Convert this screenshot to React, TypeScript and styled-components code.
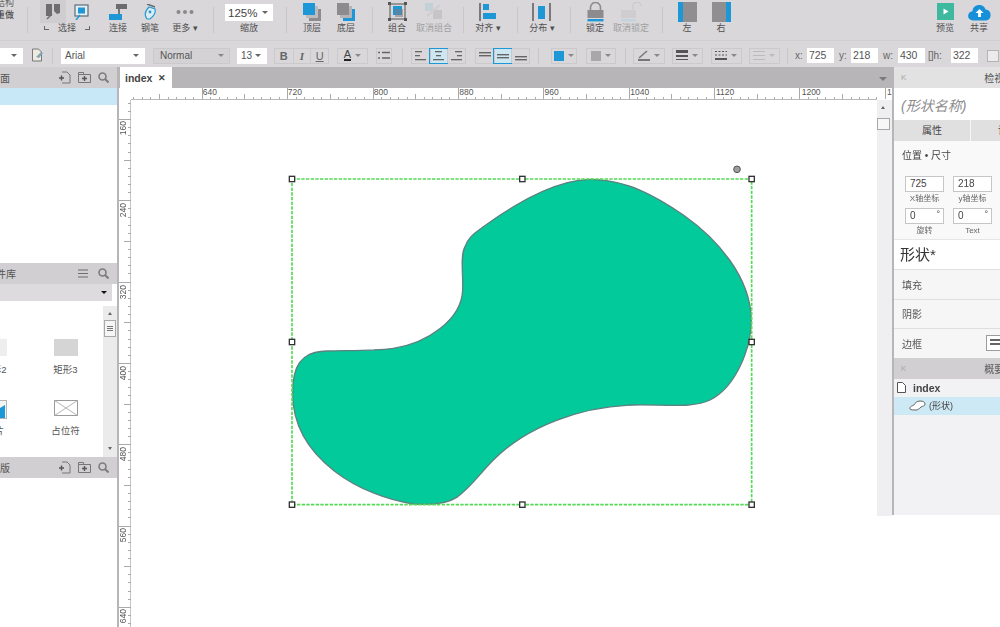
import React from 'react';
import styled, { createGlobalStyle } from 'styled-components';

const GlobalStyle = createGlobalStyle`
  html, body {
    margin: 0;
    padding: 0;
    background: #ffffff;
    overflow: hidden;
  }
  * {
    box-sizing: border-box;
  }
`;

const FONT = `"Liberation Sans", "Noto Sans CJK SC", sans-serif`;
const BLUE = '#1d97d6';

const Page = styled.div`
  width: 1000px;
  height: 627px;
  display: flex;
  flex-direction: column;
  overflow: hidden;
  font-family: ${FONT};
  color: #4a494b;
  filter: blur(0.3px);
`;

/* ---------- top toolbar ---------- */

const TopBar = styled.div`
  height: 41px;
  flex: none;
  display: flex;
  background: #d9d7d9;
  border-bottom: 1px solid #d0ced0;
  overflow: hidden;
`;

const FileMenu = styled.div`
  width: 27px;
  flex: none;
  font-size: 9px;
  line-height: 11px;
  padding-right: 13px;
  white-space: nowrap;
  direction: rtl;
  color: #333;
  & > div:first-child {
    margin-top: -2px;
    color: #666;
  }
  & > div:last-child {
    margin-top: 1px;
  }
`;

const Divider = styled.div<{ $ml?: number; $h?: number }>`
  width: 1px;
  flex: none;
  height: ${p => p.$h ?? 26}px;
  align-self: center;
  margin-left: ${p => p.$ml ?? 0}px;
  background: #c8c6c8;
`;

const Tool = styled.div<{ $w: number; $ml?: number; $faded?: boolean }>`
  width: ${p => p.$w}px;
  margin-left: ${p => p.$ml ?? 0}px;
  flex: none;
  display: flex;
  flex-direction: column;
  align-items: center;
  color: ${p => (p.$faded ? '#a09fa2' : '#505052')};
`;

const IconSlot = styled.div`
  height: 23px;
  display: flex;
  align-items: center;
  justify-content: center;
  gap: 8px;
`;

const ToolLabel = styled.div`
  font-size: 9px;
  line-height: 12px;
  margin-top: -1px;
  white-space: nowrap;
`;

const SelectTool = styled(Tool)`
  position: relative;
`;

const HotIcon = styled.div`
  width: 26px;
  height: 23px;
  margin-left: -5px;
  display: flex;
  align-items: center;
  justify-content: center;
  background: #cfcdcf;
`;

const Bracket = styled.span<{ $side: 'left' | 'right' }>`
  position: absolute;
  top: 26px;
  ${p => (p.$side === 'left' ? 'left: 7px' : 'right: 7px')};
  width: 5px;
  height: 4px;
  border-bottom: 1px solid #666;
  ${p => (p.$side === 'left' ? 'border-left' : 'border-right')}: 1px solid #666;
`;

const ZoomBox = styled.div`
  width: 48px;
  height: 17px;
  margin-top: 4px;
  margin-bottom: 2px;
  padding: 0 5px 0 3px;
  display: flex;
  align-items: center;
  justify-content: space-between;
  background: #ffffff;
  font-size: 11.5px;
  color: #444;
`;

const Caret = styled.span<{ $color?: string }>`
  width: 0;
  height: 0;
  flex: none;
  border-left: 3px solid transparent;
  border-right: 3px solid transparent;
  border-top: 3px solid ${p => p.$color ?? '#666'};
`;

const PushRight = styled.div`
  margin-left: auto;
  display: flex;
  padding-right: 4px;
`;

/* ---------- format toolbar ---------- */

const FormatBar = styled.div`
  height: 26px;
  flex: none;
  display: flex;
  align-items: center;
  padding-top: 3px;
  background: #d9d7d9;
  overflow: hidden;
`;

const Select = styled.div<{ $w: number; $ml?: number; $flat?: boolean }>`
  width: ${p => p.$w}px;
  margin-left: ${p => p.$ml ?? 0}px;
  height: 16px;
  flex: none;
  padding: 0 5px 0 3px;
  display: flex;
  align-items: center;
  justify-content: space-between;
  font-size: 10px;
  color: #555;
  background: ${p => (p.$flat ? '#d4d2d4' : '#ffffff')};
  border: 1px solid ${p => (p.$flat ? '#cbc9cb' : '#ffffff')};
  & > span:first-child {
    padding-left: ${p => (p.$flat ? 3 : 0)}px;
  }
`;

const DocButton = styled.div`
  width: 14px;
  margin-left: 8px;
  flex: none;
  display: flex;
  align-items: center;
`;

const SegGroup = styled.div<{ $ml?: number }>`
  margin-left: ${p => p.$ml ?? 0}px;
  flex: none;
  display: flex;
  height: 16px;
  border: 1px solid #cbc9cb;
`;

const Seg = styled.div<{ $w?: number; $active?: boolean }>`
  width: ${p => p.$w ?? 17.67}px;
  height: 100%;
  display: flex;
  align-items: center;
  justify-content: center;
  gap: 4px;
  font-size: 11px;
  color: #666;
  background: ${p => (p.$active ? '#cde7f2' : 'transparent')};
  outline: ${p => (p.$active ? `1px solid ${BLUE}` : 'none')};
  & + & {
    border-left: 1px solid #cbc9cb;
  }
`;

const BoldLetter = styled.span`
  font-weight: bold;
`;

const ItalicLetter = styled.span`
  font-style: italic;
  font-family: "Liberation Serif", serif;
  font-weight: bold;
`;

const UnderLetter = styled.span`
  text-decoration: underline;
`;

const ColorA = styled.span`
  font-size: 11px;
  line-height: 9px;
  border-bottom: 2px solid #222;
  color: #444;
`;

const Swatch = styled.span<{ $color: string }>`
  width: 10px;
  height: 10px;
  background: ${p => p.$color};
`;

const FieldLabel = styled.span<{ $w: number; $ml?: number }>`
  width: ${p => p.$w}px;
  margin-left: ${p => p.$ml ?? 0}px;
  flex: none;
  font-size: 10px;
  color: #666;
  white-space: nowrap;
`;

const NumberBox = styled.div`
  width: 27px;
  height: 15px;
  flex: none;
  padding-left: 2px;
  font-size: 10.5px;
  line-height: 15px;
  background: #ffffff;
  color: #555;
`;

const FlagBox = styled.div`
  width: 12px;
  height: 12px;
  margin-left: 9px;
  flex: none;
  background: #ecebec;
  border: 1px solid #b5b3b5;
`;

/* ---------- body columns ---------- */

const Body = styled.div`
  flex: 1;
  min-height: 0;
  display: grid;
  grid-template-columns: 119px 773px 108px;
`;

const LeftPanel = styled.aside`
  display: flex;
  flex-direction: column;
  overflow: hidden;
  border-right: 2px solid #b7b5b7;
  background: #ffffff;
`;

const PanelHead = styled.div<{ $gap?: number }>`
  height: 21px;
  flex: none;
  display: flex;
  align-items: center;
  gap: ${p => p.$gap ?? 7}px;
  padding-right: 8px;
  background: #d1cfd1;
  font-size: 10px;
  color: #555;
`;

const PanelTitle = styled.span<{ $shift: number }>`
  margin-left: ${p => p.$shift}px;
  margin-right: auto;
  white-space: nowrap;
`;

const SelectedRow = styled.div`
  height: 17px;
  flex: none;
  background: #c9e8f7;
`;

const PagesBody = styled.div`
  flex: none;
  height: 158px;
  background: #ffffff;
`;

const LibrarySelect = styled.div`
  height: 22px;
  flex: none;
  padding: 0 5px 5px 0;
  background: #ffffff;
  & > div {
    height: 17px;
    padding-right: 5px;
    display: flex;
    align-items: center;
    justify-content: flex-end;
    background: #dddbdd;
  }
`;

const LibraryBody = styled.div`
  height: 151px;
  flex: none;
  display: flex;
  overflow: hidden;
`;

const LibraryGrid = styled.div`
  width: 103px;
  flex: none;
  padding-top: 33px;
  overflow: hidden;
  display: grid;
  grid-template-columns: 71px 71px;
  grid-auto-rows: 61px;
  & > * {
    transform: translateX(-41px);
  }
`;

const Widget = styled.div`
  display: flex;
  flex-direction: column;
  align-items: center;
  font-size: 9.5px;
  line-height: 12px;
  color: #555;
`;

const WidgetPreview = styled.div<{ $color?: string }>`
  width: 24px;
  height: 17px;
  margin-bottom: 8px;
  background: ${p => p.$color ?? 'transparent'};
`;

const LibScroll = styled.div`
  width: 14px;
  flex: none;
  position: relative;
  background: #ecebec;
`;

const LibThumb = styled.div`
  position: absolute;
  left: 1px;
  top: 14px;
  width: 12px;
  height: 17px;
  background: #f5f5f5;
  border: 1px solid #a9a7a9;
  display: flex;
  flex-direction: column;
  gap: 1px;
  align-items: center;
  justify-content: center;
  & > i {
    width: 6px;
    height: 1px;
    background: #777;
  }
`;

const ScrollArrow = styled.span<{ $dir: 'up' | 'down'; $top: number; $left: number }>`
  position: absolute;
  top: ${p => p.$top}px;
  left: ${p => p.$left}px;
  width: 0;
  height: 0;
  border-left: 2px solid transparent;
  border-right: 2px solid transparent;
  ${p => (p.$dir === 'up' ? 'border-bottom' : 'border-top')}: 3px solid #666;
`;

/* ---------- centre ---------- */

const Center = styled.main`
  min-width: 0;
  display: flex;
  flex-direction: column;
  overflow: hidden;
`;

const TabStrip = styled.div`
  height: 21px;
  flex: none;
  position: relative;
  padding-left: 1px;
  background: #b7b5b7;
  display: flex;
  align-items: flex-end;
`;

const Tab = styled.div`
  width: 52px;
  height: 21px;
  display: flex;
  align-items: center;
  justify-content: space-between;
  padding: 0 6px 0 5px;
  background: #ffffff;
  font-size: 10.5px;
  font-weight: bold;
  color: #444;
  & > span:last-child {
    font-size: 9px;
  }
`;

const TabMenu = styled(Caret)`
  position: absolute;
  right: 5px;
  top: 10px;
  border-left-width: 4px;
  border-right-width: 4px;
  border-top-width: 4px;
`;

const RulerTop = styled.div`
  height: 12px;
  flex: none;
  position: relative;
  background: #ffffff;
  overflow: hidden;
  & > svg {
    position: absolute;
    left: 0;
    top: 0;
  }
`;

const RulerMark = styled.span<{ $x: number }>`
  position: absolute;
  left: ${p => p.$x + 1}px;
  top: 0;
  font-size: 8.5px;
  line-height: 9px;
  color: #555;
`;

const CanvasRow = styled.div`
  flex: 1;
  min-height: 0;
  display: flex;
  align-items: flex-start;
`;

const RulerSide = styled.div`
  width: 12px;
  height: 100%;
  flex: none;
  position: relative;
  overflow: hidden;
  & > svg {
    position: absolute;
    left: 0;
    top: 0;
  }
`;

const RulerSideMark = styled.span<{ $y: number }>`
  position: absolute;
  left: 0;
  top: ${p => p.$y + 2}px;
  writing-mode: vertical-rl;
  transform: rotate(180deg);
  font-size: 8.5px;
  line-height: 9px;
  color: #555;
`;

const Canvas = styled.div`
  flex: 1;
  height: 100%;
  position: relative;
  background: #ffffff;
`;

const ShapeLayer = styled.svg`
  position: absolute;
  left: 149px;
  top: 60px;
  width: 490px;
  height: 360px;
`;

const MainScroll = styled.div`
  width: 15px;
  height: 416px;
  flex: none;
  position: relative;
  background: #efeef0;
`;

const MainThumb = styled.div`
  position: absolute;
  left: 0;
  top: 18px;
  width: 13px;
  height: 12px;
  background: #f7f7f7;
  border: 1px solid #a9a7a9;
`;

/* ---------- right panel ---------- */

const RightPanel = styled.aside`
  height: 448px;
  display: flex;
  flex-direction: column;
  overflow: hidden;
  border-left: 2px solid #b7b5b7;
  background: #f2f1f3;
`;

const DockHead = styled.div<{ $dark?: boolean }>`
  height: 21px;
  flex: none;
  display: flex;
  align-items: center;
  padding-left: 7px;
  background: ${p => (p.$dark ? '#d1cfd1' : '#e3e2e3')};
  font-size: 10px;
  color: #555;
  white-space: nowrap;
  & > b {
    font-weight: normal;
    color: #a9a8aa;
    font-size: 8px;
  }
  & > span {
    margin-left: 78px;
  }
`;

const NameRow = styled.div`
  height: 32px;
  flex: none;
  padding: 7px 0 0 7px;
  background: #ffffff;
  font-size: 14px;
  font-style: italic;
  color: #8c8b8e;
  white-space: nowrap;
`;

const TabsRow = styled.div`
  height: 21px;
  flex: none;
  display: flex;
  background: #e1e0e1;
  font-size: 10px;
  color: #444;
`;

const InspectorTab = styled.div<{ $w: number }>`
  width: ${p => p.$w}px;
  flex: none;
  text-align: center;
  line-height: 21px;
  white-space: nowrap;
  overflow: hidden;
  border-right: 1px solid #f6f6f6;
  &:last-child {
    border-right: 0;
    text-align: left;
    padding-left: 27px;
  }
`;

const Props = styled.div`
  height: 98px;
  flex: none;
  padding: 8px 0 0 8px;
  background: #f9f9fa;
`;

const SectionTitle = styled.div`
  font-size: 10px;
  line-height: 14px;
  color: #444;
  margin-bottom: 13px;
`;

const FieldGrid = styled.div`
  display: grid;
  grid-template-columns: 39px 39px;
  column-gap: 9px;
  margin-left: 3px;
  row-gap: 2px;
`;

const FieldCell = styled.div`
  text-align: center;
  font-size: 8px;
  line-height: 14px;
  color: #666;
`;

const FieldInput = styled.div`
  height: 16px;
  position: relative;
  padding-left: 4px;
  text-align: left;
  font-size: 10px;
  line-height: 14px;
  background: #ffffff;
  border: 1px solid #c6c5c7;
  color: #444;
`;

const Degree = styled.span`
  position: absolute;
  right: 3px;
  top: 0;
  font-size: 9px;
  line-height: 10px;
`;

const ShapeTitle = styled.div`
  height: 30px;
  flex: none;
  padding: 4px 0 0 6px;
  background: #ffffff;
  border-top: 1px solid #e6e5e7;
  font-size: 15px;
  line-height: 22px;
  color: #333;
`;

const PropRow = styled.div`
  height: 29.67px;
  flex: none;
  position: relative;
  display: flex;
  align-items: center;
  padding-left: 8px;
  background: #f6f6f7;
  border-top: 1px solid #dfdee0;
  font-size: 10px;
  color: #555;
`;

const BorderButton = styled.div`
  position: absolute;
  left: 92px;
  top: 6px;
  width: 30px;
  height: 16px;
  padding: 3px 0 0 3px;
  display: flex;
  flex-direction: column;
  gap: 2px;
  background: #ffffff;
  border: 1px solid #9c9b9d;
  & > i {
    width: 12px;
    height: 2px;
    background: #666;
  }
`;

const OutlineRow = styled.div<{ $selected?: boolean }>`
  height: 18px;
  flex: none;
  display: flex;
  align-items: center;
  gap: ${p => (p.$selected ? 3 : 7)}px;
  padding-left: ${p => (p.$selected ? 15 : 3)}px;
  background: ${p => (p.$selected ? '#cde9f5' : 'transparent')};
  font-size: ${p => (p.$selected ? 9 : 10.5)}px;
  color: #444;
  white-space: nowrap;
`;

const OutlineName = styled.span`
  font-weight: bold;
`;

/* ---------- icons (drawings from the app toolbar) ---------- */

const I = {
  pick: (
    <svg width="15" height="17" viewBox="0 0 15 17">
      <path d="M0 1h6v12H0zM8 1h6v9l-3 1-3-3z" fill="#6f6d70" />
      <path d="M1 16l5-5" stroke="#6f6d70" strokeWidth="1.5" />
    </svg>
  ),
  connectPick: (
    <svg width="15" height="16" viewBox="0 0 15 16">
      <rect x="1" y="1" width="13" height="11" fill="#e8eef2" stroke="#5d6d78" strokeWidth="1.2" />
      <rect x="4" y="3.500" width="7" height="6" fill={BLUE} />
      <path d="M2 16l4-5" stroke={BLUE} strokeWidth="1.5" />
    </svg>
  ),
  connect: (
    <svg width="18" height="16" viewBox="0 0 18 16">
      <rect x="7" y="0" width="11" height="5" fill="#6d6b6e" />
      <path d="M10 5v6" stroke="#555" strokeWidth="1.5" />
      <rect x="0" y="10" width="13" height="6" fill={BLUE} />
    </svg>
  ),
  pen: (
    <svg width="13" height="16" viewBox="0 0 13 16">
      <path d="M3 0l8 3" stroke="#5d6d78" strokeWidth="1.5" />
      <path d="M5 3l6 2c1 4-1 7-5 10H3C0 11 1 7 5 3z" fill="#d9edf6" stroke="#2a9ad0" strokeWidth="1.2" />
      <circle cx="6" cy="8" r="1.4" fill="#2a9ad0" />
    </svg>
  ),
  dots: (
    <svg width="18" height="6" viewBox="0 0 18 6">
      <circle cx="2.5" cy="3" r="2" fill="#8a888b" />
      <circle cx="9" cy="3" r="2" fill="#8a888b" />
      <circle cx="15.5" cy="3" r="2" fill="#8a888b" />
    </svg>
  ),
  front: (
    <svg width="18" height="18" viewBox="0 0 18 18">
      <rect x="6" y="6" width="12" height="12" fill="#8d8b8e" />
      <rect x="3" y="3" width="12" height="12" fill="#bdbbbe" />
      <rect x="0" y="0" width="12" height="12" fill={BLUE} />
    </svg>
  ),
  back: (
    <svg width="18" height="18" viewBox="0 0 18 18">
      <rect x="6" y="6" width="12" height="12" fill={BLUE} />
      <rect x="3" y="3" width="12" height="12" fill="#b5b3b6" />
      <rect x="0" y="0" width="12" height="12" fill="#8d8b8e" />
    </svg>
  ),
  group: (
    <svg width="19" height="19" viewBox="0 0 19 19">
      <rect x="2" y="2" width="15" height="15" fill="none" stroke="#555" />
      <rect x="5" y="4" width="9" height="9" fill={BLUE} />
      <rect x="7" y="7" width="8" height="8" fill="#7e7c7f" opacity=".55" />
      <path d="M0 0h3v3H0zM16 0h3v3h-3zM0 16h3v3H0zM16 16h3v3h-3z" fill="#555" />
    </svg>
  ),
  ungroup: (
    <svg width="20" height="19" viewBox="0 0 20 19" opacity=".45">
      <rect x="1" y="1" width="8" height="8" fill="#a9c9d8" />
      <rect x="9" y="8" width="9" height="9" fill="#b0aeb1" />
      <path d="M3 14L16 3" stroke="#c4c2c5" strokeWidth="2" />
    </svg>
  ),
  align: (
    <svg width="18" height="18" viewBox="0 0 18 18">
      <rect x="0" y="0" width="2" height="18" fill="#7b797c" />
      <rect x="4" y="1" width="6" height="6" fill={BLUE} />
      <rect x="4" y="10" width="13" height="6" fill={BLUE} />
    </svg>
  ),
  distribute: (
    <svg width="20" height="18" viewBox="0 0 20 18">
      <rect x="0" y="0" width="2" height="18" fill="#7b797c" />
      <rect x="6" y="3" width="7" height="13" fill={BLUE} />
      <rect x="17" y="0" width="2" height="18" fill="#7b797c" />
    </svg>
  ),
  lock: (
    <svg width="17" height="20" viewBox="0 0 17 20">
      <path d="M3.5 8V5.5a5 5 0 0110 0V8" fill="none" stroke="#8d8b8e" strokeWidth="1.6" />
      <rect x="0.5" y="8" width="16" height="8" fill="#8d8b8e" />
      <rect x="0.5" y="17" width="16" height="2.4" fill={BLUE} />
    </svg>
  ),
  unlock: (
    <svg width="21" height="20" viewBox="0 0 21 20" opacity=".4">
      <path d="M12 7V4a4 4 0 018 0" fill="none" stroke="#bbb" strokeWidth="1.4" />
      <rect x="0" y="8" width="15" height="8" fill="#c1bfc2" />
      <rect x="0" y="17" width="15" height="2.4" fill="#9fd0e6" />
    </svg>
  ),
  left: (
    <svg width="19" height="20" viewBox="0 0 19 20">
      <rect x="0" y="0" width="5" height="20" fill={BLUE} />
      <rect x="5" y="0" width="14" height="20" fill="#908e91" />
    </svg>
  ),
  right: (
    <svg width="19" height="20" viewBox="0 0 19 20">
      <rect x="0" y="0" width="14" height="20" fill="#908e91" />
      <rect x="14" y="0" width="5" height="20" fill={BLUE} />
    </svg>
  ),
  preview: (
    <svg width="17" height="17" viewBox="0 0 17 17">
      <rect width="17" height="17" fill="#3fb8a0" />
      <path d="M6.5 5.5l5 3-5 3z" fill="#ffffff" />
    </svg>
  ),
  share: (
    <svg width="23" height="18" viewBox="0 0 23 18">
      <path d="M5 17.5a4.6 4.6 0 01-.6-9.2A6.8 6.8 0 0117.6 6.6a5.500 5.500 0 01.4 10.900z" fill="#1790da" />
      <path d="M11.5 6l4 4h-2.600v4h-2.800v-4H7.500z" fill="#ffffff" />
    </svg>
  ),
  doc: (
    <svg width="14" height="15" viewBox="0 0 14 15">
      <path d="M1.5 1h6l3 3v9h-9z" fill="#eeeae0" stroke="#777" />
      <path d="M5 9l5-5 2 1-4 5z" fill="#7fa7b8" />
    </svg>
  ),
  newPage: (
    <svg width="12" height="13" viewBox="0 0 12 13">
      <path d="M3 1h5l3 3v8H3" fill="none" stroke="#777" />
      <path d="M0 7h5M2.5 4.5v5" stroke="#555" strokeWidth="1.4" />
    </svg>
  ),
  newFolder: (
    <svg width="13" height="11" viewBox="0 0 13 11">
      <path d="M.5 2.5h12v8H.5zM.5 2.5v-2h5v2" fill="none" stroke="#777" />
      <path d="M4 6.500h5M6.500 4v5" stroke="#555" strokeWidth="1.4" />
    </svg>
  ),
  search: (
    <svg width="11" height="11" viewBox="0 0 11 11">
      <circle cx="4.5" cy="4.5" r="3.5" fill="none" stroke="#7d7b7e" strokeWidth="1.6" />
      <path d="M7 7l3.500 3.500" stroke="#7d7b7e" strokeWidth="2" />
    </svg>
  ),
  menu: (
    <svg width="10" height="9" viewBox="0 0 10 9">
      <path d="M0 1h10M0 4.500h10M0 8h10" stroke="#6f6d70" strokeWidth="1.2" />
    </svg>
  ),
  placeholder: (
    <svg width="24" height="16" viewBox="0 0 24 16">
      <rect x=".5" y=".5" width="23" height="15" fill="#ffffff" stroke="#9a999b" />
      <path d="M.5.500l23 15M23.500.500l-23 15" stroke="#b5b4b6" />
    </svg>
  ),
  picture: (
    <svg width="24" height="19" viewBox="0 0 24 19">
      <rect x=".5" y=".5" width="23" height="18" fill="#f5f5f5" stroke="#b5b4b6" />
      <path d="M1 18l21-13v13z" fill={BLUE} />
    </svg>
  ),
  pageDoc: (
    <svg width="9" height="11" viewBox="0 0 9 11">
      <path d="M.5.500h5l3 3v7h-8z" fill="#ffffff" stroke="#555" />
    </svg>
  ),
  cloud: (
    <svg width="17" height="11" viewBox="0 0 17 11">
      <path d="M1 9c-1-2 2-3 4-4 1-2 3-4 6-4s5 1 5 3-2 2-4 3-2 3-5 3-5 0-6-1z" fill="#ffffff" stroke="#666" />
    </svg>
  ),
  bullets: (
    <svg width="12" height="11" viewBox="0 0 12 11">
      <path d="M0 2.500h2M4 2.500h8M0 8h2M4 8h8" stroke="#666" strokeWidth="1.4" />
    </svg>
  ),
};

const lineGlyph = (rows: number[], color = '#666') => (
  <svg width="12" height="11" viewBox="0 0 12 11">
    {rows.map(y => (
      <rect key={y} x="0" y={y} width="12" height="1.4" fill={color} />
    ))}
  </svg>
);

const alignGlyph = (kind: 'l' | 'c' | 'r') => {
  const x = (w: number) => (kind === 'l' ? 0 : kind === 'r' ? 11 - w : (11 - w) / 2);
  return (
    <svg width="11" height="11" viewBox="0 0 11 11">
      {[
        [1, 7],
        [5, 5],
        [9, 11],
      ].map(([y, w]) => (
        <rect key={y} x={x(w)} y={y} width={w} height="1.3" fill="#666" />
      ))}
    </svg>
  );
};

/* ---------- rulers ---------- */

const HORIZONTAL_MARKS = [
  [82.7, '640'],
  [167.8, '720'],
  [253.7, '800'],
  [339.2, '880'],
  [424.5, '960'],
  [510.3, '1040'],
  [596, '1120'],
  [681.7, '1200'],
  [767.1, '1'],
] as const;

const VERTICAL_MARKS = [
  [19, '160'],
  [101, '240'],
  [183, '320'],
  [264, '400'],
  [345, '480'],
  [425.5, '560'],
  [507, '640'],
] as const;

const TopTicks: React.FC = () => {
  const ticks: React.ReactNode[] = [];
  for (let i = 0; i < 92; i++) {
    const x = Math.round(82.7 - 85.4 + i * 8.54) + 0.5;
    if (x < 12 || x > 772) continue;
    const n = i % 10;
    const top = n === 0 ? 0 : n === 5 ? 6 : 9;
    ticks.push(<line key={i} x1={x} x2={x} y1={top} y2={11} stroke="#a9a8aa" strokeWidth="1" />);
  }
  return (
    <svg width="773" height="12">
      <path d="M12 11.5H758" stroke="#b9b8ba" />
      {ticks}
    </svg>
  );
};

const SideTicks: React.FC = () => {
  const ticks: React.ReactNode[] = [];
  for (let i = 0; i < 70; i++) {
    const y = Math.round(19 - 8.13 * 2 + i * 8.13) + 0.5;
    const n = (i - 2 + 100) % 10;
    const left = n === 0 ? 0 : n === 5 ? 5 : 9;
    ticks.push(<line key={i} x1={left} x2={12} y1={y} y2={y} stroke="#a9a8aa" strokeWidth="1" />);
  }
  return (
    <svg width="12" height="527">
      <path d="M11.5 0V527" stroke="#c4c3c5" />
      {ticks}
    </svg>
  );
};

const handles = [
  [36, 57],
  [727, 57],
  [1415, 57],
  [36, 546],
  [1415, 546],
  [36, 1034],
  [727, 1034],
  [1415, 1034],
];

const BLOB =
  'M38 700C38 620 60 575 140 573C200 571 280 573 340 565C440 550 545 480 548 390C550 340 540 290 555 260C565 230 585 220 610 200C700 135 820 60 930 58C1040 58 1130 110 1210 165C1310 235 1412 350 1414 480C1414 560 1370 680 1290 720C1240 745 1160 733 1060 735C900 740 740 800 640 900C600 940 570 985 530 1012C495 1035 440 1035 400 1032C250 1010 38 900 38 700Z';

const App: React.FC = () => {
  return (
    <Page>
      <GlobalStyle />

      <TopBar>
        <FileMenu>
          <div>结构</div>
          <div>重做</div>
        </FileMenu>
        <Divider />
        <SelectTool $w={60} $ml={9}>
          <IconSlot>
            <HotIcon>{I.pick}</HotIcon>
            {I.connectPick}
          </IconSlot>
          <ToolLabel>选择</ToolLabel>
          <Bracket $side="left" />
          <Bracket $side="right" />
        </SelectTool>
        <Tool $w={42}>
          <IconSlot>{I.connect}</IconSlot>
          <ToolLabel>连接</ToolLabel>
        </Tool>
        <Tool $w={22}>
          <IconSlot>{I.pen}</IconSlot>
          <ToolLabel>钢笔</ToolLabel>
        </Tool>
        <Tool $w={48}>
          <IconSlot>{I.dots}</IconSlot>
          <ToolLabel>更多 ▾</ToolLabel>
        </Tool>
        <Divider $ml={4} />
        <Tool $w={70}>
          <ZoomBox>
            <span>125%</span>
            <Caret />
          </ZoomBox>
          <ToolLabel>缩放</ToolLabel>
        </Tool>
        <Divider $ml={2} />
        <Tool $w={34} $ml={8}>
          <IconSlot>{I.front}</IconSlot>
          <ToolLabel>顶层</ToolLabel>
        </Tool>
        <Tool $w={34}>
          <IconSlot>{I.back}</IconSlot>
          <ToolLabel>底层</ToolLabel>
        </Tool>
        <Divider $ml={9} />
        <Tool $w={34} $ml={7}>
          <IconSlot>{I.group}</IconSlot>
          <ToolLabel>组合</ToolLabel>
        </Tool>
        <Tool $w={40} $faded>
          <IconSlot>{I.ungroup}</IconSlot>
          <ToolLabel>取消组合</ToolLabel>
        </Tool>
        <Divider $ml={9} />
        <Tool $w={48}>
          <IconSlot>{I.align}</IconSlot>
          <ToolLabel>对齐 ▾</ToolLabel>
        </Tool>
        <Divider $ml={5} />
        <Tool $w={48}>
          <IconSlot>{I.distribute}</IconSlot>
          <ToolLabel>分布 ▾</ToolLabel>
        </Tool>
        <Divider $ml={4} />
        <Tool $w={34} $ml={7}>
          <IconSlot>{I.lock}</IconSlot>
          <ToolLabel>锁定</ToolLabel>
        </Tool>
        <Tool $w={38} $faded>
          <IconSlot>{I.unlock}</IconSlot>
          <ToolLabel>取消锁定</ToolLabel>
        </Tool>
        <Divider $ml={12} />
        <Tool $w={34} $ml={7}>
          <IconSlot>{I.left}</IconSlot>
          <ToolLabel>左</ToolLabel>
        </Tool>
        <Tool $w={34}>
          <IconSlot>{I.right}</IconSlot>
          <ToolLabel>右</ToolLabel>
        </Tool>
        <PushRight>
          <Tool $w={34}>
            <IconSlot>{I.preview}</IconSlot>
            <ToolLabel>预览</ToolLabel>
          </Tool>
          <Tool $w={34}>
            <IconSlot>{I.share}</IconSlot>
            <ToolLabel>共享</ToolLabel>
          </Tool>
        </PushRight>
      </TopBar>

      <FormatBar>
        <Select $w={23}>
          <span />
          <Caret />
        </Select>
        <DocButton>{I.doc}</DocButton>
        <Divider $ml={7} $h={16} />
        <Select $w={84} $ml={8}>
          <span>Arial</span>
          <Caret />
        </Select>
        <Select $w={77} $ml={8} $flat>
          <span>Normal</span>
          <Caret $color="#888" />
        </Select>
        <Select $w={30} $ml={7}>
          <span>13</span>
          <Caret />
        </Select>
        <SegGroup $ml={7}>
          <Seg><BoldLetter>B</BoldLetter></Seg>
          <Seg><ItalicLetter>I</ItalicLetter></Seg>
          <Seg><UnderLetter>U</UnderLetter></Seg>
        </SegGroup>
        <SegGroup $ml={8}>
          <Seg $w={29}>
            <ColorA>A</ColorA>
            <Caret $color="#888" />
          </Seg>
        </SegGroup>
        <SegGroup $ml={8}>
          <Seg $w={14}>{I.bullets}</Seg>
        </SegGroup>
        <Divider $ml={10} $h={16} />
        <SegGroup $ml={8}>
          <Seg>{alignGlyph('l')}</Seg>
          <Seg $active>{alignGlyph('c')}</Seg>
          <Seg>{alignGlyph('r')}</Seg>
        </SegGroup>
        <SegGroup $ml={9}>
          <Seg>{lineGlyph([2, 5])}</Seg>
          <Seg $active>{lineGlyph([4, 7])}</Seg>
          <Seg>{lineGlyph([6, 9])}</Seg>
        </SegGroup>
        <Divider $ml={8} $h={16} />
        <SegGroup $ml={12}>
          <Seg $w={24}>
            <Swatch $color={BLUE} />
            <Caret $color="#888" />
          </Seg>
        </SegGroup>
        <SegGroup $ml={9}>
          <Seg $w={28}>
            <Swatch $color="#a9a7aa" />
            <Caret $color="#888" />
          </Seg>
        </SegGroup>
        <Divider $ml={9} $h={16} />
        <SegGroup $ml={7}>
          <Seg $w={30}>
            <svg width="12" height="11" viewBox="0 0 12 11">
              <path d="M1 8l8-7" stroke="#777" strokeWidth="1.5" />
              <rect y="9" width="12" height="2" fill="#777" />
            </svg>
            <Caret $color="#888" />
          </Seg>
        </SegGroup>
        <SegGroup $ml={7}>
          <Seg $w={29}>
            <svg width="12" height="11" viewBox="0 0 12 11">
              <rect y="0" width="12" height="3" fill="#555" />
              <rect y="5" width="12" height="2" fill="#555" />
              <rect y="9" width="12" height="1" fill="#555" />
            </svg>
            <Caret $color="#888" />
          </Seg>
        </SegGroup>
        <SegGroup $ml={8}>
          <Seg $w={29}>
            <svg width="12" height="11" viewBox="0 0 12 11">
              <path d="M0 1.5h12M0 5h12" stroke="#555" strokeDasharray="2 1.5" />
              <rect y="8" width="12" height="2" fill="#555" />
            </svg>
            <Caret $color="#888" />
          </Seg>
        </SegGroup>
        <SegGroup $ml={7}>
          <Seg $w={29}>
            <svg width="12" height="11" viewBox="0 0 12 11">
              <path d="M0 1.5h12M0 5.500h12M0 9.500h12" stroke="#bcbabc" />
            </svg>
            <Caret $color="#bbb" />
          </Seg>
        </SegGroup>
        <Divider $ml={7} $h={16} />
        <FieldLabel $w={12} $ml={7}>x:</FieldLabel>
        <NumberBox>725</NumberBox>
        <FieldLabel $w={12} $ml={5}>y:</FieldLabel>
        <NumberBox>218</NumberBox>
        <FieldLabel $w={15} $ml={5}>w:</FieldLabel>
        <NumberBox>430</NumberBox>
        <FieldLabel $w={23} $ml={3}>[]h:</FieldLabel>
        <NumberBox>322</NumberBox>
        <FlagBox />
      </FormatBar>

      <Body>
        <LeftPanel>
          <PanelHead>
            <PanelTitle $shift={-10}>页面</PanelTitle>
            {I.newPage}
            {I.newFolder}
            {I.search}
          </PanelHead>
          <SelectedRow />
          <PagesBody />
          <PanelHead $gap={10}>
            <PanelTitle $shift={-14}>元件库</PanelTitle>
            {I.menu}
            {I.search}
          </PanelHead>
          <LibrarySelect>
            <div>
              <Caret $color="#111" />
            </div>
          </LibrarySelect>
          <LibraryBody>
            <LibraryGrid>
              <Widget>
                <WidgetPreview $color="#efeeef" />
                矩形2
              </Widget>
              <Widget>
                <WidgetPreview $color="#d6d5d6" />
                矩形3
              </Widget>
              <Widget>
                <WidgetPreview>{I.picture}</WidgetPreview>
                图片
              </Widget>
              <Widget>
                <WidgetPreview>{I.placeholder}</WidgetPreview>
                占位符
              </Widget>
            </LibraryGrid>
            <LibScroll>
              <ScrollArrow $dir="up" $top={6} $left={5} />
              <LibThumb>
                <i />
                <i />
                <i />
              </LibThumb>
              <ScrollArrow $dir="down" $top={141} $left={5} />
            </LibScroll>
          </LibraryBody>
          <PanelHead>
            <PanelTitle $shift={-10}>母版</PanelTitle>
            {I.newPage}
            {I.newFolder}
            {I.search}
          </PanelHead>
        </LeftPanel>

        <Center>
          <TabStrip>
            <Tab>
              <span>index</span>
              <span>✕</span>
            </Tab>
            <TabMenu $color="#7b797c" />
          </TabStrip>
          <RulerTop>
            <TopTicks />
            {HORIZONTAL_MARKS.map(([x, label]) => (
              <RulerMark key={label} $x={x}>
                {label}
              </RulerMark>
            ))}
          </RulerTop>
          <CanvasRow>
            <RulerSide>
              <SideTicks />
              {VERTICAL_MARKS.map(([y, label], i) => (
                <RulerSideMark key={i} $y={y}>
                  {label}
                </RulerSideMark>
              ))}
            </RulerSide>
            <Canvas>
              <ShapeLayer viewBox="0 0 1470 1080">
                <path d={BLOB} fill="#03ca9a" stroke="#5f8080" strokeWidth="4" />
                <rect
                  x="36"
                  y="57"
                  width="1379"
                  height="977"
                  fill="none"
                  stroke="#54da54"
                  strokeWidth="5"
                  strokeDasharray="10 4"
                />
                {handles.map(([x, y]) => (
                  <rect
                    key={`${x}-${y}`}
                    x={x - 8}
                    y={y - 8}
                    width="16"
                    height="16"
                    fill="#ffffff"
                    stroke="#333"
                    strokeWidth="4"
                  />
                ))}
                <circle cx="1371" cy="28" r="10" fill="#9d9c9e" stroke="#555" strokeWidth="3" />
              </ShapeLayer>
            </Canvas>
            <MainScroll>
              <ScrollArrow $dir="up" $top={6} $left={4} />
              <MainThumb />
            </MainScroll>
          </CanvasRow>
        </Center>

        <RightPanel>
          <DockHead>
            <b>K</b>
            <span>检视: 形状</span>
          </DockHead>
          <NameRow>(形状名称)</NameRow>
          <TabsRow>
            <InspectorTab $w={77}>属性</InspectorTab>
            <InspectorTab $w={29}>说明</InspectorTab>
          </TabsRow>
          <Props>
            <SectionTitle>位置 • 尺寸</SectionTitle>
            <FieldGrid>
              <FieldCell>
                <FieldInput>725</FieldInput>
                X轴坐标
              </FieldCell>
              <FieldCell>
                <FieldInput>218</FieldInput>
                y轴坐标
              </FieldCell>
              <FieldCell>
                <FieldInput>
                  0<Degree>°</Degree>
                </FieldInput>
                旋转
              </FieldCell>
              <FieldCell>
                <FieldInput>
                  0<Degree>°</Degree>
                </FieldInput>
                Text
              </FieldCell>
            </FieldGrid>
          </Props>
          <ShapeTitle>形状*</ShapeTitle>
          <PropRow>填充</PropRow>
          <PropRow>阴影</PropRow>
          <PropRow>
            边框
            <BorderButton>
              <i />
              <i />
            </BorderButton>
          </PropRow>
          <DockHead $dark>
            <b>K</b>
            <span>概要: 页面</span>
          </DockHead>
          <OutlineRow>
            {I.pageDoc}
            <OutlineName>index</OutlineName>
          </OutlineRow>
          <OutlineRow $selected>
            {I.cloud}
            (形状)
          </OutlineRow>
        </RightPanel>
      </Body>
    </Page>
  );
};

export default App;
